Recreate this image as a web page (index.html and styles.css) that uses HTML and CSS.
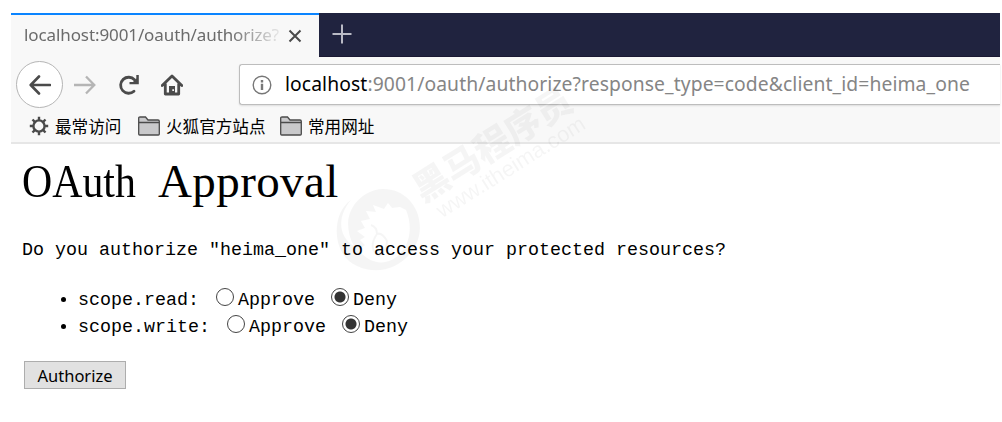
FILE: index.html
```html
<!DOCTYPE html>
<html lang="en">
<head>
<meta charset="utf-8">
<title>OAuth Approval</title>
<link rel="stylesheet" href="styles.css">
</head>
<body>
<div class="browser">
  <div class="tabs">
    <div class="tab">
      <span class="tab-title">localhost:9001/oauth/authorize?</span>
      <svg class="close" width="14" height="14" viewBox="0 0 14 14"><path d="M1.5 1.5l11 11M12.5 1.5l-11 11"/></svg>
    </div>
    <svg class="plus" width="20" height="20" viewBox="0 0 20 20"><path d="M10 .5v19M.5 10h19"/></svg>
  </div>
  <div class="toolbar">
    <div class="back"><svg width="22" height="20" viewBox="0 0 22 20"><path d="M21 10H2M10 1.5L1.7 10l8.3 8.5"/></svg></div>
    <svg class="forward" width="22" height="20" viewBox="0 0 22 20"><path d="M0 10h20M12 1.500l8.300 8.500-8.300 8.500"/></svg>
    <svg class="reload" width="22" height="22" viewBox="0 0 22 22"><path class="line" d="M16 17.200A8 8 0 1 1 16.500 5.800"/><path class="solid" d="M20.800 1v9.300h-9.300v-2.300h3.500l3.300-3.500V1z"/></svg>
    <svg class="home" width="22" height="22" viewBox="0 0 22 22"><path class="line" d="M1.200 11.500L11 2l9.800 9.500M4.300 10v10h13.400V10"/><path class="solid" d="M8 12h6v8H8z"/><path class="spot" d="M11.300 15.200h1.700v1.700h-1.700z"/></svg>
    <div class="address">
      <svg class="info" width="20" height="20" viewBox="0 0 20 20"><circle cx="10" cy="10" r="8.800"/><path d="M10 8.800V15M10 5v2.400"/></svg>
      <span class="url"><span class="host">localhost</span>:9001/oauth/authorize?response_type=code&amp;client_id=heima_one</span>
    </div>
  </div>
  <div class="bookmarks">
    <svg class="gear" width="20" height="20" viewBox="0 0 20 20"><circle cx="10" cy="10" r="5.600"/><path d="M10 .8v4M10 15.200v4M.8 10h4M15.200 10h4M3.500 3.500l2.800 2.800M13.700 13.700l2.800 2.800M16.500 3.500l-2.800 2.800M6.300 13.700l-2.800 2.800"/></svg>
    <span class="mark first">最常访问</span>
    <svg class="folder" width="22" height="20" viewBox="0 0 22 20"><path d="M.7 18V2.200Q.7 1 2 1h5.500l2.500 3h10q1.300 0 1.300 1.300V18q0 1-1 1H1.700q-1 0-1-1zM.7 6.500h20.600"/></svg>
    <span class="mark second">火狐官方站点</span>
    <svg class="folder" width="22" height="20" viewBox="0 0 22 20"><path d="M.7 18V2.200Q.7 1 2 1h5.500l2.500 3h10q1.300 0 1.300 1.300V18q0 1-1 1H1.700q-1 0-1-1zM.7 6.500h20.600"/></svg>
    <span class="mark">常用网址</span>
  </div>
</div>
<main class="page">
  <h1><span class="word lead">OAuth</span> <span class="word">Approval</span></h1>
  <p class="question">Do you authorize "heima_one" to access your protected resources?</p>
  <form class="form">
    <ul class="scopes">
      <li>scope.read:<label class="choice"><input type="radio" name="read">Approve</label><label class="choice"><input type="radio" name="read" checked>Deny</label></li>
      <li>scope.write:<label class="choice"><input type="radio" name="write">Approve</label><label class="choice"><input type="radio" name="write" checked>Deny</label></li>
    </ul>
    <button class="submit" type="button">Authorize</button>
  </form>
</main>
<svg class="watermark" width="270" height="200" viewBox="330 80 270 200">
  <path fill-rule="evenodd" d="M351 200C331 213 331 255 357 266C386 280 419 258 420 228C420 204 402 188 382 189C364 190 349 205 348 223Q348 236 354 246C337 236 338 215 351 200ZM400 207L406 210C415 232 407 254 389 261C378 265 366 260 359 250L365 245L360 240L365 237L357 231L365 228L361 221L370 219L366 211L376 212L373 205L384 209L388 203L392 208Z"/>
  <path class="trace" d="M371 225Q377 227 377 234C370 244 372 252 379 256Q387 250 387 241Q382 232 377 234"/>
  <g transform="rotate(-32 424 205)"><text class="wm-name" x="424" y="203">黑马程序员</text><text class="wm-site" x="432" y="226">www.itheima.com</text></g>
</svg>
</body>
</html>
```
FILE: styles.css
```css
* { box-sizing: border-box; }
body { margin: 0; height: 422px; overflow: hidden; background: #fff; color: #000; }
svg { display: block; flex: none; fill: none; stroke: #4b4b4b; }
.browser { margin: 13px 2px 0 11px; height: 131px; background: #f8f8f8; border-bottom: 2px solid #e6e6e6; font-family: "Noto Sans", "Noto Sans CJK SC", sans-serif; }
.tabs { display: flex; align-items: center; height: 44px; background: #20233f; border-bottom: 1px solid #1a1833; }
.tab { display: flex; align-items: center; width: 308px; height: 44px; padding-left: 13px; background: #f8f8f8; border-top: 2px solid #0a84ff; }
.tab-title { width: 257px; margin-top: -2px; font-size: 17px; letter-spacing: -.1px; white-space: nowrap; color: #6b6b6b; -webkit-mask-image: linear-gradient(90deg, #000 80%, transparent 102%); mask-image: linear-gradient(90deg, #000 80%, transparent 102%); }
.close { margin-left: 7px; stroke-width: 2; }
.plus { margin: -2px 0 0 13px; stroke: #b9bac5; stroke-width: 2; }
.toolbar { display: flex; align-items: center; height: 55px; padding-left: 5px; }
.back { display: flex; align-items: center; justify-content: center; width: 47px; height: 47px; border: 1px solid #b5b5b5; border-radius: 50%; background: #fff; }
.back svg { stroke-width: 2.6; stroke-linecap: round; stroke-linejoin: round; }
.forward { margin-left: 11px; stroke: #b5b5b5; stroke-width: 2.3; }
.reload { margin-left: 22px; }
.home { margin-left: 21px; }
.line { stroke-width: 2.8; stroke-linejoin: round; stroke-linecap: round; }
.solid { fill: #4b4b4b; stroke: none; }
.spot { fill: #f8f8f8; stroke: none; }
.address { display: flex; align-items: center; flex: 1; min-width: 0; height: 41px; margin-left: 56px; padding-left: 12px; background: #fff; border: 1px solid #bdbdbd; border-right: 0; border-radius: 3px 0 0 3px; box-shadow: 0 1px 2px #ddd; }
.info { stroke: #777; stroke-width: 1.4; }
.info path { stroke-width: 2.4; }
.url { margin-left: 13px; margin-top: -2px; font-size: 19.300px; letter-spacing: .1px; white-space: nowrap; color: #858585; }
.host { color: #000; }
.bookmarks { display: flex; align-items: center; height: 29px; padding-left: 18px; margin-top: -1px; }
.gear circle, .gear path { stroke-width: 2.4; }
.mark { margin-left: 6px; font: 16.600px/24px "Noto Sans CJK SC", sans-serif; white-space: nowrap; }
.first { width: 66px; margin-right: 17px; }
.second { width: 99px; margin-right: 15px; }
.folder { fill: #c9c9cb; stroke-width: 1.3; }
.page { padding: 11px 0 0 22px; font: 18.330px "Liberation Mono", monospace; }
h1 { display: flex; margin: 0; height: 52px; font: 400 47px/52px "Liberation Serif", serif; }
.word { display: block; letter-spacing: .4px; }
.lead { width: 136px; letter-spacing: 0; transform: scaleX(.89); transform-origin: left; }
.question { margin: 32px 0 0; height: 24px; line-height: 24px; white-space: nowrap; }
.scopes { margin: 24px 0 0; padding-left: 56px; }
.scopes li { height: 27px; line-height: 27px; white-space: nowrap; }
.choice { margin-left: 17px; }
.choice + .choice { margin-left: 16px; }
.choice input { appearance: none; width: 18px; height: 18px; margin: 0 4px 0 0; border: 1.500px solid #444; border-radius: 50%; vertical-align: -1px; background: #fff; }
.choice input:checked { background: radial-gradient(circle, #333 0 5px, #fff 6px); }
.submit { display: block; width: 102px; height: 28px; margin: 20px 0 0 2px; padding: 0; border: 1px solid #adadad; background: #e1e1e1; color: #000; font: 16.500px "Noto Sans", sans-serif; }
.watermark { position: absolute; left: 330px; top: 80px; overflow: visible; opacity: .035; pointer-events: none; }
.watermark path, .watermark text { fill: #000; stroke: none; }
.watermark .trace { fill: none; stroke: #000; stroke-width: 2; }
.wm-name { font: 900 36px "Noto Sans CJK SC", sans-serif; }
.wm-site { font: 22px "Liberation Sans", sans-serif; }
```
